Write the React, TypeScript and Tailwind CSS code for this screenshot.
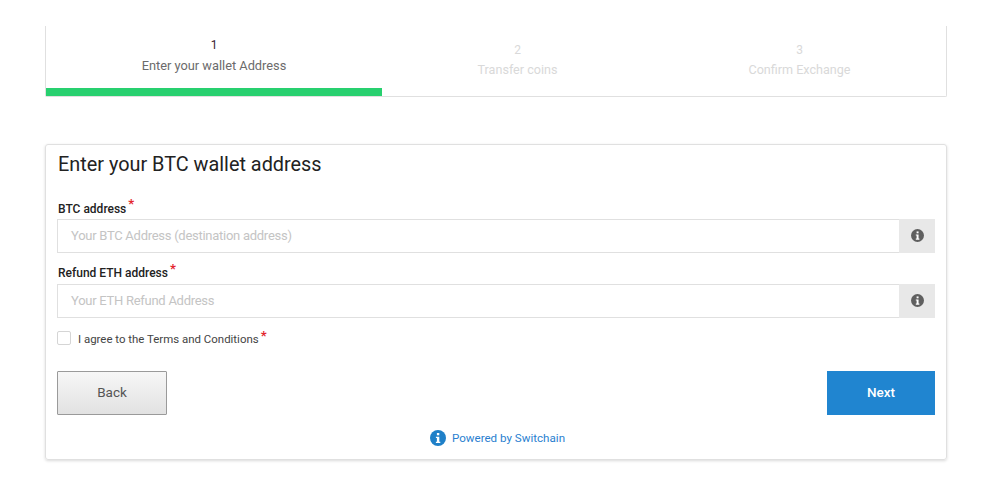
import React from "react";

function InfoIcon({ size, bg, className }: { size: number; bg: string; className?: string }) {
  return (
    <svg width={size} height={size} viewBox="0 0 16 16" className={className}>
      <circle cx="8" cy="8" r="8" fill={bg} />
      <rect x="6.9" y="3" width="2.4" height="2.3" fill="#fff" />
      <path d="M5.9 6.7h3.4v5h1v1.4H5.9v-1.4h1v-3.6h-1z" fill="#fff" />
    </svg>
  );
}

function Star() {
  return <span className="text-[#e3262e] text-[13px] font-bold leading-none ml-[2px] relative -top-[3px]">*</span>;
}

function Step({ n, label, active, width }: { n: string; label: string; active?: boolean; width: string }) {
  return (
    <div className={`${width} flex flex-col`}>
      <div className={active ? "h-[62px] flex flex-col items-center pt-[12px]" : "h-[62px] flex flex-col items-center pt-[17px]"}>
        <span className={active ? "text-[12px] leading-[14px] text-[#3b2330]" : "text-[12px] leading-[14px] text-[#d9d9d9]"}>{n}</span>
        <span className={active ? "text-[12.8px] leading-[16px] mt-[6px] text-[#6b6b6b]" : "text-[12.6px] leading-[16px] mt-[5px] text-[#d9d9d9]"}>{label}</span>
      </div>
      <div className={active ? "h-[8px] bg-[#28d06f]" : "h-[8px]"} />
    </div>
  );
}

function Field({ label, placeholder, topClass, labelClass }: { label: string; placeholder: string; topClass: string; labelClass: string }) {
  return (
    <div className={topClass}>
      <div className={`flex items-start h-[17px] ml-[1px] text-[12px] font-medium text-[#222] ${labelClass}`}>
        {label}
        <Star />
      </div>
      <div className="flex h-[34px] mt-[2px]">
        <div className="flex-1 flex items-center pl-[13px] border border-[#e0e0e0] border-r-0 text-[13px] tracking-[-0.27px] text-[#c4c4c4]">
          {placeholder}
        </div>
        <div className="w-[36px] bg-[#e8e8e8] flex items-center justify-center pb-[2px]">
          <InfoIcon size={13} bg="#5f5f5f" />
        </div>
      </div>
    </div>
  );
}

export default function App() {
  return (
    <div className="h-[501px] bg-white pt-[26px] px-[45px] [font-family:Roboto,'Liberation_Sans',sans-serif] overflow-hidden">
      <div className="w-[902px] h-[71px] border-x border-b border-[#e0e0e0] rounded-b-[2px] flex">
        <Step n="1" label="Enter your wallet Address" active width="w-[336px]" />
        <Step n="2" label="Transfer coins" width="w-[271px]" />
        <Step n="3" label="Confirm Exchange" width="flex-1" />
      </div>

      <div className="w-[902px] h-[316px] mt-[47px] border border-[#e0e0e0] rounded-[3px] shadow-[0_1px_3px_rgba(0,0,0,0.15)] pl-[11px] pr-[11px] flex flex-col">
        <h1 className="text-[19.85px] leading-[24px] mt-[8px] ml-[1px] font-normal text-[#222]">Enter your BTC wallet address</h1>
        <Field label="BTC address" placeholder="Your BTC Address (destination address)" topClass="mt-[23px]" labelClass="leading-[18px]" />
        <Field label="Refund ETH address" placeholder="Your ETH Refund Address" topClass="mt-[12px]" labelClass="leading-[16px]" />
        <div className="flex items-center mt-[13px] h-[14px]">
          <span className="w-[14px] h-[14px] border border-[#d5d5d5] rounded-[2px]" />
          <span className="ml-[7px] text-[11.45px] leading-[16px] pt-[1px] text-[#444]">I agree to the Terms and Conditions</span>
          <Star />
        </div>
        <div className="flex justify-between mt-[26px]">
          <div className="w-[110px] h-[44px] flex items-center justify-center border border-[#9a9a9a] rounded-[1px] bg-gradient-to-b from-[#f7f7f7] to-[#e2e2e2] text-[13.5px] text-[#555] pb-[2px]">
            Back
          </div>
          <div className="w-[108px] h-[44px] flex items-center justify-center bg-[#2085d0] text-[13.5px] font-medium text-white pb-[2px]">
            Next
          </div>
        </div>
        <div className="flex items-center justify-center mt-[14px] h-[18px] pl-[3px]">
          <InfoIcon size={16} bg="#1f80c8" />
          <span className="ml-[6px] text-[11.6px] pt-[2px] text-[#2a7fd0]">Powered by Switchain</span>
        </div>
      </div>
    </div>
  );
}
